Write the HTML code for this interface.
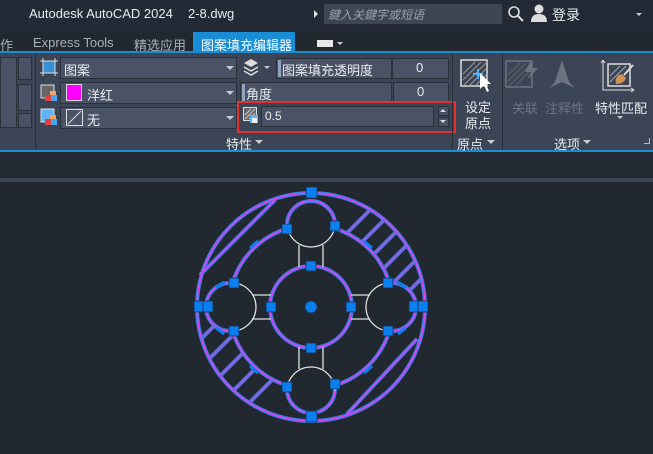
<!DOCTYPE html>
<html><head><meta charset="utf-8"><style>
*{margin:0;padding:0;box-sizing:border-box}
body{width:653px;height:454px;overflow:hidden;background:#212830;font-family:"Liberation Sans","Noto Sans CJK SC",sans-serif;position:relative;color:#e8ecf0}
.a{position:absolute}
.t{font-size:13px;white-space:nowrap}
.dd{position:absolute;background:#4a5366;border:1px solid #2b313c}
.arr{position:absolute;width:0;height:0;border-left:4px solid transparent;border-right:4px solid transparent;border-top:4px solid #c8ccd2}
.gray{color:#6d7480}
</style></head><body>
<div class="a" style="left:0;top:0;width:653px;height:32px;background:#232a35"></div>
<div class="a t" style="left:29px;top:6px;font-size:13px">Autodesk AutoCAD 2024</div>
<div class="a t" style="left:188px;top:6px;font-size:13px">2-8.dwg</div>
<div class="a" style="left:314px;top:10px;border-top:4px solid transparent;border-bottom:4px solid transparent;border-left:4px solid #ddd"></div>
<div class="a" style="left:324px;top:4px;width:178px;height:20px;background:#3d4655"></div>
<div class="a t" style="left:328px;top:6px;font-size:12px;color:#9aa1ab;font-style:italic">鍵入关鍵字或短语</div>
<svg class="a" style="left:507px;top:5px" width="18" height="18"><circle cx="7" cy="7" r="5" fill="none" stroke="#ddd" stroke-width="1.6"/><line x1="11" y1="11" x2="16" y2="16" stroke="#ddd" stroke-width="2"/></svg>
<svg class="a" style="left:531px;top:4px" width="16" height="18"><circle cx="8" cy="5" r="4.5" fill="#ddd"/><path d="M0 18 Q0 10 8 10 Q16 10 16 18Z" fill="#ddd"/></svg>
<div class="a t" style="left:552px;top:5px;font-size:14px">登录</div>
<div class="arr" style="left:636px;top:13px;border-top-color:#ccc;border-width:3px 3px 0"></div>
<div class="a t" style="left:0;top:35px;color:#aab0b8">作</div>
<div class="a t" style="left:33px;top:35px;color:#aab0b8">Express Tools</div>
<div class="a t" style="left:134px;top:35px;color:#aab0b8">精选应用</div>
<div class="a" style="left:193px;top:32px;width:102px;height:20px;background:#1a8ed4"></div>
<div class="a t" style="left:201px;top:35px;color:#fff">图案填充编辑器</div>
<div class="a" style="left:317px;top:40px;width:16px;height:7px;background:#e8e8e8"></div>
<div class="arr" style="left:337px;top:42px;border-width:3px 3px 0"></div>
<div class="a" style="left:0;top:51px;width:653px;height:2px;background:#1a8ed4"></div>
<div class="a" style="left:0;top:53px;width:653px;height:97px;background:#3c4556"></div>
<div class="a" style="left:0;top:150px;width:653px;height:2px;background:#1a8ed4"></div>
<div class="a" style="left:0;top:57px;width:17px;height:71px;background:#4a5366;border:1px solid #2b313c"></div>
<div class="a" style="left:18px;top:57px;width:14px;height:23px;background:#4a5366;border:1px solid #2b313c"></div>
<div class="a" style="left:18px;top:84px;width:14px;height:27px;background:#4a5366;border:1px solid #2b313c"></div>
<div class="a" style="left:18px;top:113px;width:14px;height:15px;background:#4a5366;border:1px solid #2b313c"></div>
<div class="a" style="left:35px;top:53px;width:1px;height:97px;background:#2a303a"></div>
<svg class="a" style="left:40px;top:58px" width="18" height="72">
<rect x="3" y="3" width="12" height="12" fill="#3b8fd8" stroke="#ddd"/><path d="M0 3H18M0 15H18M3 0V18M15 0V18" stroke="#ddd"/>
<rect x="1" y="27" width="13" height="13" fill="#666" stroke="#ddd"/><rect x="10" y="33" width="6" height="6" fill="#f4a460"/><rect x="5" y="37" width="6" height="6" fill="#e04040"/><rect x="11" y="37" width="6" height="6" fill="#4aa8f0"/>
<rect x="1" y="51" width="13" height="13" fill="#5fb4f5" stroke="#ddd"/><rect x="10" y="57" width="6" height="6" fill="#f4a460"/><rect x="5" y="61" width="6" height="6" fill="#e04040"/><rect x="11" y="61" width="6" height="6" fill="#4aa8f0"/>
</svg>
<div class="dd" style="left:60px;top:57px;width:177px;height:22px"></div>
<div class="a t" style="left:64px;top:60px">图案</div>
<div class="arr" style="left:226px;top:66px"></div>
<div class="dd" style="left:60px;top:82px;width:177px;height:22px"></div>
<div class="a" style="left:66px;top:84px;width:16px;height:17px;background:#f0f;border:1px solid #ddd"></div>
<div class="a t" style="left:87px;top:85px">洋红</div>
<div class="arr" style="left:226px;top:91px"></div>
<div class="dd" style="left:60px;top:107px;width:177px;height:22px"></div>
<svg class="a" style="left:66px;top:109px" width="17" height="17"><rect x="0.5" y="0.5" width="16" height="16" fill="none" stroke="#ddd"/><line x1="2" y1="15" x2="15" y2="2" stroke="#ddd"/></svg>
<div class="a t" style="left:87px;top:110px">无</div>
<div class="arr" style="left:226px;top:116px"></div>
<svg class="a" style="left:243px;top:58px" width="16" height="18"><path d="M1 5L8 1L15 5L8 9Z" fill="#ddd"/><path d="M1 9L8 13L15 9M1 13L8 17L15 13" stroke="#ddd" fill="none" stroke-width="1.5"/></svg>
<div class="arr" style="left:264px;top:66px;border-width:3px 3px 0"></div>
<div class="dd" style="left:276px;top:58px;width:116px;height:21px"></div>
<div class="a" style="left:278px;top:60px;width:3px;height:17px;background:#8fa3c0"></div>
<div class="a t" style="left:282px;top:60px">图案填充透明度</div>
<div class="dd" style="left:392px;top:58px;width:57px;height:21px"></div>
<div class="a t" style="left:416px;top:60px">0</div>
<div class="dd" style="left:240px;top:82px;width:152px;height:21px"></div>
<div class="a" style="left:242px;top:84px;width:3px;height:17px;background:#8fa3c0"></div>
<div class="a t" style="left:246px;top:84px">角度</div>
<div class="dd" style="left:393px;top:82px;width:56px;height:21px"></div>
<div class="a t" style="left:417px;top:84px">0</div>
<svg class="a" style="left:243px;top:107px" width="16" height="18"><rect x="0.5" y="0.5" width="13" height="13" fill="#666" stroke="#ddd"/><path d="M2 12L12 2M2 8L8 2M6 12L12 6" stroke="#ccc"/><rect x="7" y="8" width="8" height="8" fill="#5fb4f5"/><rect x="9" y="11" width="5" height="5" fill="#eee"/></svg>
<div class="dd" style="left:261px;top:106px;width:173px;height:21px"></div>
<div class="a t" style="left:265px;top:109px;font-size:12px">0.5</div>
<div class="dd" style="left:438px;top:106px;width:11px;height:10px"></div>
<div class="dd" style="left:438px;top:117px;width:11px;height:10px"></div>
<div class="a" style="left:440px;top:109px;border-left:3px solid transparent;border-right:3px solid transparent;border-bottom:3px solid #ddd"></div>
<div class="a" style="left:440px;top:120px;border-left:3px solid transparent;border-right:3px solid transparent;border-top:3px solid #ddd"></div>
<div class="a" style="left:237px;top:101px;width:219px;height:32px;border:2px solid #e8302f"></div>
<div class="a t" style="left:226px;top:134px">特性</div>
<div class="arr" style="left:255px;top:140px"></div>
<div class="a" style="left:452px;top:53px;width:1px;height:97px;background:#2a303a"></div>
<svg class="a" style="left:460px;top:59px" width="32" height="36"><rect x="1" y="1" width="26" height="26" fill="none" stroke="#ddd" stroke-width="1.5"/><path d="M3 15L15 3M3 21L21 3M3 27L27 3M9 27L27 9M15 27L27 15" stroke="#999"/><path d="M18 10V20M13 15H23" stroke="#4ab0ff" stroke-width="2"/><path d="M20 14L20 30L24 26L27 33L29 32L26 25L31 25Z" fill="#fff"/></svg>
<div class="a t" style="left:465px;top:97px">设定</div>
<div class="a t" style="left:465px;top:113px">原点</div>
<div class="a t" style="left:457px;top:134px">原点</div>
<div class="arr" style="left:487px;top:140px"></div>
<div class="a" style="left:502px;top:53px;width:1px;height:97px;background:#2a303a"></div>
<svg class="a" style="left:505px;top:60px" width="35" height="32"><rect x="1" y="1" width="26" height="26" fill="none" stroke="#6d7480" stroke-width="1.5"/><path d="M3 15L15 3M3 21L21 3M3 27L27 3M9 27L27 9" stroke="#5d6470"/><path d="M26 0L20 12L26 12L22 20L33 8L27 8Z" fill="#6d7480"/></svg>
<svg class="a" style="left:547px;top:60px" width="30" height="32"><path d="M15 0L22 22L28 28L15 22L2 28L8 22Z" fill="#6d7480"/></svg>
<div class="a t gray" style="left:512px;top:98px">关联</div>
<div class="a t gray" style="left:545px;top:98px">注释性</div>
<svg class="a" style="left:600px;top:60px" width="36" height="34"><path d="M3 0V30H34" stroke="#ddd" fill="none"/><path d="M1 3L3 0L5 3M31 28L34 30L31 32" stroke="#ddd" fill="none"/><rect x="8" y="4" width="22" height="22" fill="none" stroke="#ddd" stroke-width="1.5"/><path d="M10 16L20 6M10 22L26 6" stroke="#aaa"/><path d="M16 24Q14 16 22 14L26 18Q24 24 16 24Z" fill="#d09050"/><path d="M24 15L33 5" stroke="#ddd" stroke-width="2"/></svg>
<div class="a t" style="left:595px;top:98px">特性匹配</div>
<div class="arr" style="left:617px;top:116px;border-width:3px 3px 0"></div>
<div class="a t" style="left:554px;top:134px">选项</div>
<div class="arr" style="left:583px;top:140px"></div>
<div class="a" style="left:644px;top:138px;width:6px;height:6px;border-right:1px solid #bbb;border-bottom:1px solid #bbb"></div>
<div class="a" style="left:0;top:152px;width:653px;height:26px;background:#232a34"></div>
<div class="a" style="left:0;top:178px;width:653px;height:4px;background:#3b4453"></div>
<svg class="a" style="left:0;top:0" width="653" height="454">
<defs>
<clipPath id="ring"><path clip-rule="evenodd" d="M197 307a114 114 0 1 0 228 0a114 114 0 1 0 -228 0ZM229 307a82 82 0 1 0 164 0a82 82 0 1 0 -164 0Z"/></clipPath>
<clipPath id="q1"><path d="M311 307L311 180L440 180L440 307Z"/></clipPath>
<clipPath id="q3"><path d="M311 307L311 440L180 440L180 307Z"/></clipPath>
</defs>
<g fill="none">
<g clip-path="url(#ring)">
<g clip-path="url(#q1)"><g stroke="#3a7ce0" stroke-width="4"><path d="M300 280L380 200M314 290L394 210M328 300L408 220M342 310L422 230M356 320L436 240M370 330L450 250"/></g>
<g stroke="#d93ff0" stroke-width="1.3"><path d="M300 280L380 200M314 290L394 210M328 300L408 220M342 310L422 230M356 320L436 240M370 330L450 250"/></g></g>
<g clip-path="url(#q3)"><g stroke="#3a7ce0" stroke-width="4"><path d="M170 370L250 290M184 384L264 304M198 398L278 318M212 412L292 332M226 426L306 346"/></g>
<g stroke="#d93ff0" stroke-width="1.3"><path d="M170 370L250 290M184 384L264 304M198 398L278 318M212 412L292 332M226 426L306 346"/></g></g>
</g>
<g fill="#212830"><circle cx="311" cy="223" r="25"/><circle cx="311" cy="391" r="25"/><circle cx="230" cy="307" r="25"/><circle cx="392" cy="307" r="25"/></g>
<g stroke="#3a7ce0" stroke-width="4">
<circle cx="311" cy="307" r="114"/><circle cx="311" cy="307" r="82"/><circle cx="311" cy="307" r="41"/>
<path d="M287 225A24 24 0 0 1 335 225M287 389A24 24 0 0 0 335 389M230 283A24 24 0 0 0 230 331M392 283A24 24 0 0 1 392 331"/>
<path d="M200 275L275 200M417 339L347 414"/>
</g>
<g stroke="#e040f5" stroke-width="1.5">
<circle cx="311" cy="307" r="114"/><circle cx="311" cy="307" r="82"/><circle cx="311" cy="307" r="41"/>
<path d="M287 225A24 24 0 0 1 335 225M287 389A24 24 0 0 0 335 389M230 283A24 24 0 0 0 230 331M392 283A24 24 0 0 1 392 331"/>
<path d="M200 275L275 200M417 339L347 414"/>
</g>
<path fill="#212830" d="M290 220h42v25h-42zM290 369h42v25h-42zM225 286h25v42h-25zM372 286h25v42h-25z"/>
<g stroke="#e0e0e0" stroke-width="1.3">
<path d="M287 223A24 24 0 0 0 335 223M287 391A24 24 0 0 1 335 391M232 283A24 24 0 0 1 232 331M390 283A24 24 0 0 0 390 331"/>
<path d="M299 245V267M323 245V267M299 347V369M323 347V369M252 295H271M252 319H271M351 295H370M351 319H370"/>
</g>
</g>
<g fill="#0a7ff0" stroke="#1d3050" stroke-width="0.8">
<rect x="306" y="187" width="11" height="11"/><rect x="306" y="411" width="11" height="11"/>
<rect x="194" y="301" width="10" height="11"/><rect x="203" y="301" width="10" height="11"/>
<rect x="409" y="301" width="10" height="11"/><rect x="418" y="301" width="10" height="11"/>
<rect x="282" y="224" width="10" height="10"/><rect x="330" y="221" width="10" height="10"/>
<rect x="282" y="382" width="10" height="10"/><rect x="330" y="379" width="10" height="10"/>
<rect x="229" y="278" width="10" height="10"/><rect x="229" y="326" width="10" height="10"/>
<rect x="383" y="278" width="10" height="10"/><rect x="383" y="326" width="10" height="10"/>
<rect x="306" y="261" width="10" height="10"/><rect x="306" y="343" width="10" height="10"/>
<rect x="266" y="302" width="10" height="10"/><rect x="346" y="302" width="10" height="10"/>
<circle cx="311" cy="307" r="6"/>
</g>
<g stroke="#0a7ff0" stroke-width="3"><path d="M250 248L258 241M216 288L224 282M216 328L224 334M250 366L258 373M364 241L372 248M398 282L406 288M398 334L406 328M364 373L372 366"/></g>
</svg>
</body></html>
